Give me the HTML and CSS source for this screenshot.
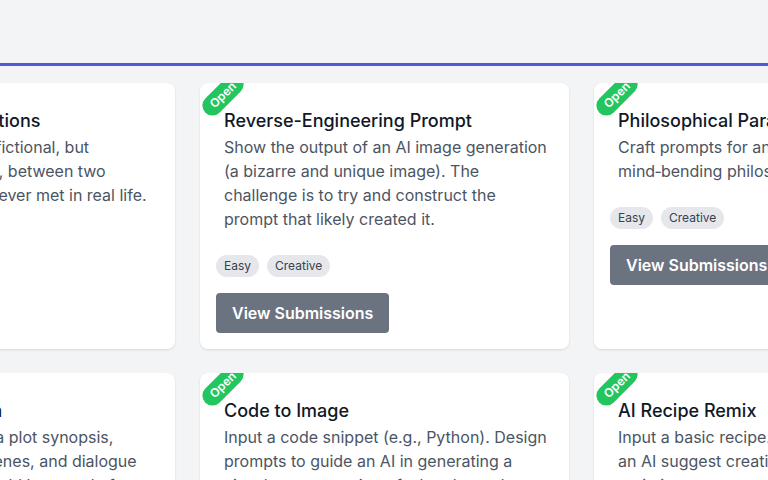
FILE: index.html
```html
<!DOCTYPE html>
<html>
<head>
<meta charset="utf-8">
<link rel="stylesheet" href="styles.css">
</head>
<body>
<div class="top"></div>
<div class="tabline"></div>
<main class="grid">
  <div class="card">
    <span class="badge">Open</span>
    <h3 class="title">Historical Conversations</h3>
    <p class="desc">Write a dialog, real or fictional, but plausible and amusing, between two eminent figures who never met in real life.</p>
    <div class="tags"><span class="tag">Easy</span><span class="tag">Creative</span></div>
    <button class="btn">View Submissions</button>
  </div>
  <div class="card">
    <span class="badge">Open</span>
    <h3 class="title">Reverse-Engineering Prompt</h3>
    <p class="desc">Show the output of an AI image generation (a bizarre and unique image). The challenge is to try and construct the prompt that likely created it.</p>
    <div class="tags"><span class="tag">Easy</span><span class="tag">Creative</span></div>
    <button class="btn">View Submissions</button>
  </div>
  <div class="card">
    <span class="badge">Open</span>
    <h3 class="title">Philosophical Paradoxes</h3>
    <p class="desc">Craft prompts for an AI to produce fresh, mind&#8209;bending philosophical paradoxes.</p>
    <div class="tags"><span class="tag">Easy</span><span class="tag">Creative</span></div>
    <button class="btn">View Submissions</button>
  </div>
  <div class="card">
    <span class="badge">Open</span>
    <h3 class="title">Film Plot Brainstorm</h3>
    <p class="desc">Provide your A.I. with a plot synopsis, allowing it to stage scenes, and dialogue that a screenwriter would be proud of.</p>
    <div class="tags"><span class="tag">Easy</span><span class="tag">Creative</span></div>
    <button class="btn">View Submissions</button>
  </div>
  <div class="card">
    <span class="badge">Open</span>
    <h3 class="title">Code to Image</h3>
    <p class="desc">Input a code snippet (e.g., Python). Design prompts to guide an AI in generating a visual representation of what the code does.</p>
    <div class="tags"><span class="tag">Easy</span><span class="tag">Creative</span></div>
    <button class="btn">View Submissions</button>
  </div>
  <div class="card">
    <span class="badge">Open</span>
    <h3 class="title">AI Recipe Remix</h3>
    <p class="desc">Input a basic recipe. Then have an&nbsp;AI&nbsp;suggest creative substitutions and variations.</p>
    <div class="tags"><span class="tag">Easy</span><span class="tag">Creative</span></div>
    <button class="btn">View Submissions</button>
  </div>
</main>
</body>
</html>
```
FILE: styles.css
```css
html, body {
  margin: 0;
  padding: 0;
  overflow: hidden;
  background: #f3f4f6;
  font-family: Inter, "Noto Sans", sans-serif;
}
.top {
  height: 63px;
  background: #f3f4f6;
}
.tabline {
  height: 3px;
  background: #5058dc;
}
.grid {
  display: grid;
  grid-template-columns: repeat(3, 369px);
  column-gap: 25px;
  row-gap: 24px;
  margin: 17px 0 0 -194px;
}
.card {
  position: relative;
  overflow: hidden;
  background: #ffffff;
  border-radius: 8px;
  box-shadow: 0 1px 3px rgba(0, 0, 0, 0.08), 0 1px 2px rgba(0, 0, 0, 0.04);
  padding: 24px 16px 16px;
  display: flex;
  flex-direction: column;
  align-items: flex-start;
}
.badge {
  position: absolute;
  left: -2px;
  top: 2px;
  width: 50px;
  height: 20px;
  line-height: 20px;
  border-radius: 10px;
  background: #22c55e;
  color: #ffffff;
  font-size: 12px;
  font-weight: 600;
  text-align: center;
  transform: rotate(-45deg);
}
.title {
  margin: 0 0 0 8px;
  font-size: 18px;
  line-height: 28px;
  font-weight: 500;
  color: #111827;
}
.desc {
  margin: 0 0 0 8px;
  font-size: 16px;
  line-height: 24px;
  color: #4b5563;
}
.tags {
  display: flex;
  gap: 8px;
  margin-top: 24px;
}
.tag {
  background: #e5e7eb;
  color: #374151;
  font-size: 12px;
  line-height: 16px;
  padding: 3px 8px;
  border-radius: 11px;
}
.btn {
  margin-top: 16px;
  border: none;
  background: #6b7280;
  color: #ffffff;
  font-family: inherit;
  font-size: 16px;
  font-weight: 600;
  line-height: 24px;
  padding: 8px 16px;
  border-radius: 4px;
}
```
